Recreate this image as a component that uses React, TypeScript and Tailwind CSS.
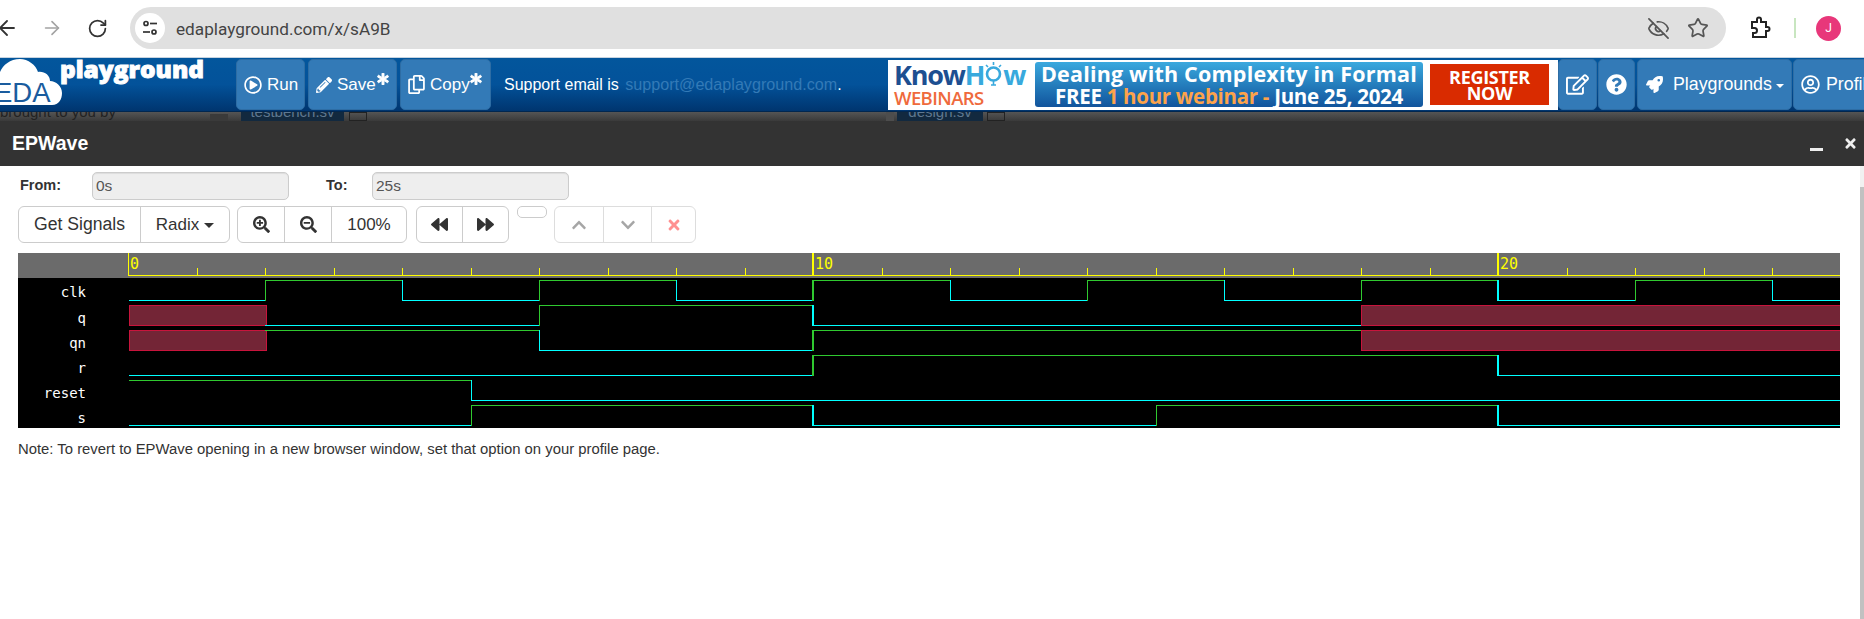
import React from "react";
import { ArrowLeft, ArrowRight, RotateCw, EyeOff, Star } from "lucide-react";
import {
  FaRegPlayCircle, FaPencilAlt, FaRegCopy, FaAsterisk, FaRegEdit, FaQuestionCircle, FaRocket,
  FaRegUserCircle, FaSearchPlus, FaSearchMinus, FaBackward, FaForward, FaChevronUp, FaChevronDown, FaTimes,
} from "react-icons/fa";

const X0 = 128;
const U = 68.5;
const px = (t: number) => Math.round(X0 + t * U);

type Seg = [number, number | "x"];
const SIGNALS: { name: string; top: number; segs: Seg[] }[] = [
  { name: "clk", top: 280, segs: [[0, 0], [2, 1], [4, 0], [6, 1], [8, 0], [10, 1], [12, 0], [14, 1], [16, 0], [18, 1], [20, 0], [22, 1], [24, 0]] },
  { name: "q", top: 305, segs: [[0, "x"], [2, 0], [6, 1], [10, 0], [18, "x"]] },
  { name: "qn", top: 330, segs: [[0, "x"], [2, 1], [6, 0], [10, 1], [18, "x"]] },
  { name: "r", top: 355, segs: [[0, 0], [10, 1], [20, 0]] },
  { name: "reset", top: 380, segs: [[0, 1], [5, 0]] },
  { name: "s", top: 405, segs: [[0, 0], [5, 1], [10, 0], [15, 1], [20, 0]] },
];

function Wave() {
  const ticks = Array.from({ length: 25 }, (_, i) => i);
  return (
    <svg width={1822} height={175} viewBox="18 253 1822 175" className="block" shapeRendering="crispEdges">
      <rect x={18} y={253} width={1822} height={175} fill="#000" />
      <rect x={18} y={253} width={1822} height={25} fill="#6b6b6b" />
      <line x1={X0} x2={1840} y1={275.5} y2={275.5} stroke="#ffff00" />
      {ticks.map((i) => {
        const major = i % 10 === 0;
        const thick = i === 10 || i === 20;
        const x = px(i) + (thick ? 0 : 0.5);
        return <line key={i} x1={x} x2={x} y1={major ? 253 : 268} y2={275} stroke="#ffff00" strokeWidth={thick ? 2 : 1} />;
      })}
      {[0, 10, 20].map((v) => (
        <text key={v} x={px(v) + 2} y={269} fill="#ffff00" fontSize={15} fontFamily="'DejaVu Sans Mono', monospace" shapeRendering="auto">
          {v}
        </text>
      ))}
      {SIGNALS.map((s) => (
        <g key={s.name}>
          <text x={86} y={s.top + (s.name === "clk" ? 17 : 18)} textAnchor="end" fill="#fff" fontSize={14} fontFamily="'DejaVu Sans Mono', monospace" shapeRendering="auto">
            {s.name}
          </text>
          {s.segs.map(([t, v], i) => {
            const next = i + 1 < s.segs.length ? s.segs[i + 1][0] : 25;
            const x1 = Math.max(px(t), 129);
            const x2 = Math.min(px(next), 1840);
            const prev = i > 0 ? s.segs[i - 1][1] : null;
            if (v === "x") {
              return <rect key={i} x={x1 + 0.5} y={s.top + 0.5} width={x2 - x1 + (x2 === 1840 ? 0 : 1)} height={20} fill="#732536" stroke="#c8143c" />;
            }
            const y = v === 1 ? s.top + 0.5 : s.top + 20.5;
            const edge = prev !== null && prev !== "x";
            const thick = t % 10 === 0 && t > 0;
            return (
              <g key={i}>
                <line x1={x1} x2={x2} y1={y} y2={y} stroke={v === 1 ? "#2fc92f" : "#00ffff"} />
                {edge && (
                  <line
                    x1={x1 + (thick ? 0 : 0.5)}
                    x2={x1 + (thick ? 0 : 0.5)}
                    y1={s.top}
                    y2={s.top + 21}
                    stroke={v === 1 ? "#2fc92f" : "#00ffff"}
                    strokeWidth={thick ? 2 : 1}
                  />
                )}
              </g>
            );
          })}
        </g>
      ))}
    </svg>
  );
}

function ChromeBar() {
  return (
    <div className="h-[57px] bg-white flex items-center pb-[1px] overflow-hidden">
      <ArrowLeft size={24} strokeWidth={1.8} className="ml-[-5px] text-[#333] shrink-0" />
      <ArrowRight size={22} strokeWidth={1.8} className="ml-[22px] text-[#a3a3a3] shrink-0" />
      <RotateCw size={21} strokeWidth={2} className="ml-[24px] text-[#333] shrink-0" />
      <div className="ml-[22px] w-[1596px] h-[42px] rounded-full bg-[#e0e0e0] flex items-center shrink-0">
        <div className="ml-[5px] w-[30px] h-[30px] rounded-full bg-white flex items-center justify-center">
          <svg width="18" height="18" viewBox="0 0 18 18" fill="none" stroke="#333" strokeWidth="1.7">
            <circle cx="5" cy="4.5" r="2" />
            <line x1="9" y1="4.5" x2="16" y2="4.5" />
            <line x1="2" y1="13" x2="9" y2="13" />
            <circle cx="13" cy="13" r="2" />
          </svg>
        </div>
        <span className="ml-[11px] mt-[3px] text-[17.2px] text-[#444] font-['Roboto',sans-serif]">edaplayground.com/x/sA9B</span>
        <EyeOff size={23} strokeWidth={1.8} className="ml-auto text-[#555]" />
        <Star size={22} strokeWidth={1.9} className="ml-[17px] mr-[17px] text-[#555]" />
      </div>
      <svg width="24" height="24" viewBox="0 0 24 24" fill="none" stroke="#222" strokeWidth="2" className="ml-[22px] shrink-0">
        <path d="M5 6h5V3.5a2 2 0 0 1 4 0V6h5v5h1.5a2 2 0 0 1 0 4H19v6H6v-4h1.5a2.4 2.4 0 0 0 0-5H5z" transform="translate(-1 0)" />
      </svg>
      <div className="ml-[22px] w-[2px] h-[20px] bg-[#c8e6c0] shrink-0" />
      <div className="ml-[20px] w-[25px] h-[25px] rounded-full bg-[#e8377a] text-white text-[12px] flex items-center justify-center shrink-0 font-['Roboto',sans-serif]">
        J
      </div>
    </div>
  );
}

function NavBtn({ className, children }: { className: string; children: React.ReactNode }) {
  return (
    <div className={`h-[51px] bg-[#337ab7] border border-[#2e6da4] rounded-[5px] flex items-center text-white text-[17px] shrink-0 ${className}`}>
      {children}
    </div>
  );
}

function Logo() {
  return (
    <svg width="236" height="54" viewBox="0 0 236 54" className="shrink-0 block">
      <path d="M-14 47 L52 47 C59 47 62 41 62 35 C62 28 56 23 50 23 C50 17 44 13 38 14 C36 7 28 1 20 1 C10 1 3 7 0 14 C-8 14 -14 20 -14 30 Z" fill="#fff" />
      <text x="-6" y="44" fontSize="27.5" fill="#1a5c9e" fontFamily="'Liberation Sans', sans-serif">EDA</text>
      <text x="60" y="20" fontSize="23" fontWeight="800" fill="#fff" stroke="#fff" strokeWidth="0.9" textLength="144" lengthAdjust="spacingAndGlyphs" fontFamily="'Open Sans', sans-serif">playground</text>
    </svg>
  );
}

function Banner() {
  return (
    <div className="w-[670px] h-[50px] bg-white flex items-center shrink-0 font-['Open_Sans',sans-serif] overflow-hidden">
      <div className="w-[147px] pl-[6px] flex flex-col shrink-0">
        <div className="flex items-center h-[26px] text-[27px] font-bold leading-none tracking-[-1.2px]">
          <span className="text-[#1d4f91]">Know</span>
          <span className="text-[#38a9dd]">H</span>
          <svg width="19" height="26" viewBox="0 0 19 26" fill="none" stroke="#38a9dd" strokeWidth="2.6" className="shrink-0">
            <circle cx="9.5" cy="13" r="6.5" />
            <path d="M9.5 19v5M7 24h5M9.5 1v3M2 4l2 2M17 4l-2 2" strokeWidth="1.6" />
          </svg>
          <span className="text-[#38a9dd]">w</span>
        </div>
        <span className="text-[18.5px] mt-[1px] font-semibold text-[#ef6a3c] leading-[20px] tracking-[-0.6px]">WEBINARS</span>
      </div>
      <div className="w-[388px] h-[45px] rounded-[3px] bg-gradient-to-b from-[#3ba9de] to-[#12549c] flex flex-col items-center justify-center text-white font-bold shrink-0">
        <span className="text-[21.5px] leading-[22px] tracking-[0.2px] whitespace-nowrap">Dealing with Complexity in Formal</span>
        <span className="text-[20.5px] leading-[22px] tracking-[-0.3px] whitespace-nowrap">
          FREE <span className="text-[#fda34a]">1 hour webinar -</span> June 25, 2024
        </span>
      </div>
      <div className="ml-[7px] w-[119px] h-[41px] bg-[#d92b00] flex flex-col items-center justify-center text-white text-[18px] font-bold tracking-[-0.3px] leading-[16px] shrink-0">
        <span>REGISTER</span>
        <span>NOW</span>
      </div>
    </div>
  );
}

function Star2() {
  return <FaAsterisk size={12} stroke="currentColor" strokeWidth={40} className="ml-[-4px] mb-[12px]" />;
}

function Nav() {
  return (
    <div className="h-[55px] border-t border-t-[#c8d4e0] border-b border-b-[#02274f] bg-gradient-to-b from-[#03569c] via-[#03529a] to-[#00356f] flex items-center overflow-hidden">
      <Logo />
      <NavBtn className="w-[69px] pl-[7px] gap-[5px]"><FaRegPlayCircle size={18} /><span>Run</span></NavBtn>
      <NavBtn className="ml-[3px] w-[89px] pl-[7px] gap-[5px]">
        <FaPencilAlt size={16} /><span>Save</span><Star2 />
      </NavBtn>
      <NavBtn className="ml-[3px] w-[91px] pl-[6px] gap-[4px]">
        <FaRegCopy size={19} /><span>Copy</span><Star2 />
      </NavBtn>
      <div className="ml-[13px] w-[384px] text-[16px] text-white shrink-0 whitespace-nowrap">
        Support email is <span className="ml-[2px] text-[16.15px] text-[#337ab7]">support@edaplayground.com</span>.
      </div>
      <Banner />
      <NavBtn className="w-[39px] justify-center"><FaRegEdit size={23} /></NavBtn>
      <NavBtn className="ml-[1px] w-[37px] justify-center"><FaQuestionCircle size={21} /></NavBtn>
      <NavBtn className="ml-[2px] w-[155px] pl-[8px]">
        <FaRocket size={17} className="mr-[10px]" /><span className="text-[17.8px]">Playgrounds</span>
        <span className="ml-[4px] mt-[2px] w-0 h-0 border-x-[4px] border-x-transparent border-t-[4px] border-t-white" />
      </NavBtn>
      <NavBtn className="ml-[1px] w-[80px] pl-[7px] rounded-r-none overflow-hidden whitespace-nowrap">
        <FaRegUserCircle size={19} className="mr-[6px] shrink-0" /><span className="text-[17.8px]">Profile</span>
      </NavBtn>
    </div>
  );
}

function Strip() {
  return (
    <div className="h-[9px] bg-gradient-to-b from-[#555] to-[#3a3a3a] flex overflow-hidden text-[15px] leading-[9px] text-[#222] font-['Liberation_Sans',sans-serif]">
      <div className="w-[210px] shrink-0 mt-[-5px] whitespace-nowrap">brought to you by</div>
      <div className="w-[18px] mt-[2px] bg-[#3a3a3a] shrink-0" />
      <div className="w-[13px] shrink-0" />
      <div className="w-[103px] bg-[#12293f] text-[#5f7890] text-center shrink-0"><div className="mt-[-5px]">testbench.sv</div></div>
      <div className="ml-[5px] w-[18px] border border-[#222] shrink-0" />
      <div className="ml-[519px] w-[8px] bg-[#4d4d4d] shrink-0" />
      <div className="ml-[3px] w-[86px] bg-[#12293f] text-[#5f7890] text-center shrink-0"><div className="mt-[-5px]">design.sv</div></div>
      <div className="ml-[4px] w-[18px] border border-[#222] shrink-0" />
    </div>
  );
}

function TitleBar() {
  return (
    <div className="h-[45px] bg-[#333] flex items-center text-white">
      <span className="ml-[12px] text-[19.5px] font-bold">EPWave</span>
      <div className="ml-auto mr-[1px] flex items-center">
        <div className="w-[13px] h-[3px] bg-[#eee] mt-[12px]" />
        <FaTimes size={15} className="ml-[20px] mr-[5px] text-[#eee]" />
      </div>
    </div>
  );
}

function Field({ label, value, labelW }: { label: string; value: string; labelW: string }) {
  return (
    <div className="flex items-center">
      <span className={`font-bold text-[14.5px] text-[#333] ${labelW}`}>{label}</span>
      <div className="w-[197px] h-[28px] bg-[#eee] border border-[#ccc] rounded-[5px] pl-[3px] text-[15.5px] text-[#555] flex items-center shadow-[inset_0_1px_1px_rgba(0,0,0,0.075)]">
        {value}
      </div>
    </div>
  );
}

function Seg({ w, children, last }: { w: string; children: React.ReactNode; last?: boolean }) {
  return (
    <div className={`h-full flex items-center justify-center ${w} ${last ? "" : "border-r border-r-[#ccc]"}`}>{children}</div>
  );
}

function Toolbar() {
  return (
    <div className="ml-[18px] mt-[6px] h-[37px] flex items-start text-[17px] text-[#333]">
      <div className="h-full flex bg-white border border-[#ccc] rounded-[6px]">
        <Seg w="w-[122px]"><span className="text-[17.6px]">Get Signals</span></Seg>
        <Seg w="w-[88px]" last>
          Radix<span className="ml-[5px] mt-[2px] w-0 h-0 border-x-[5px] border-x-transparent border-t-[5px] border-t-[#333]" />
        </Seg>
      </div>
      <div className="ml-[7px] h-full flex bg-white border border-[#ccc] rounded-[6px]">
        <Seg w="w-[47px]"><FaSearchPlus size={17} /></Seg>
        <Seg w="w-[47px]"><FaSearchMinus size={17} /></Seg>
        <Seg w="w-[74px]" last>100%</Seg>
      </div>
      <div className="ml-[9px] h-full flex bg-white border border-[#ccc] rounded-[6px]">
        <Seg w="w-[46px]"><FaBackward size={17} /></Seg>
        <Seg w="w-[45px]" last><FaForward size={17} /></Seg>
      </div>
      <div className="ml-[8px] w-[30px] h-[12px] bg-white border border-[#ccc] rounded-[5px]" />
      <div className="ml-[7px] h-full flex bg-white border border-[#ccc] rounded-[6px] opacity-65">
        <Seg w="w-[49px]"><FaChevronUp size={16} className="text-[#777]" /></Seg>
        <Seg w="w-[48px]"><FaChevronDown size={16} className="text-[#777]" /></Seg>
        <Seg w="w-[43px]" last><FaTimes size={16} className="text-[#f55]" /></Seg>
      </div>
    </div>
  );
}

export default function App() {
  return (
    <div className="w-[1864px] h-[619px] overflow-hidden bg-white font-['Liberation_Sans',Arial,sans-serif] flex flex-col">
      <ChromeBar />
      <Nav />
      <Strip />
      <TitleBar />
      <div className="flex-1 flex min-h-0">
        <div className="flex-1 min-w-0">
          <div className="ml-[20px] mt-[6px] flex items-center">
            <Field label="From:" value="0s" labelW="w-[72px]" />
            <div className="w-[37px]" />
            <Field label="To:" value="25s" labelW="w-[46px]" />
          </div>
          <Toolbar />
          <div className="ml-[18px] mt-[10px]"><Wave /></div>
          <p className="ml-[18px] mt-[10px] text-[14.85px] text-[#333]">
            Note: To revert to EPWave opening in a new browser window, set that option on your profile page.
          </p>
        </div>
        <div className="w-[4px] bg-[#f1f1f1] flex flex-col shrink-0">
          <div className="h-[21px]" />
          <div className="flex-1 bg-[#c1c1c1]" />
        </div>
      </div>
    </div>
  );
}
